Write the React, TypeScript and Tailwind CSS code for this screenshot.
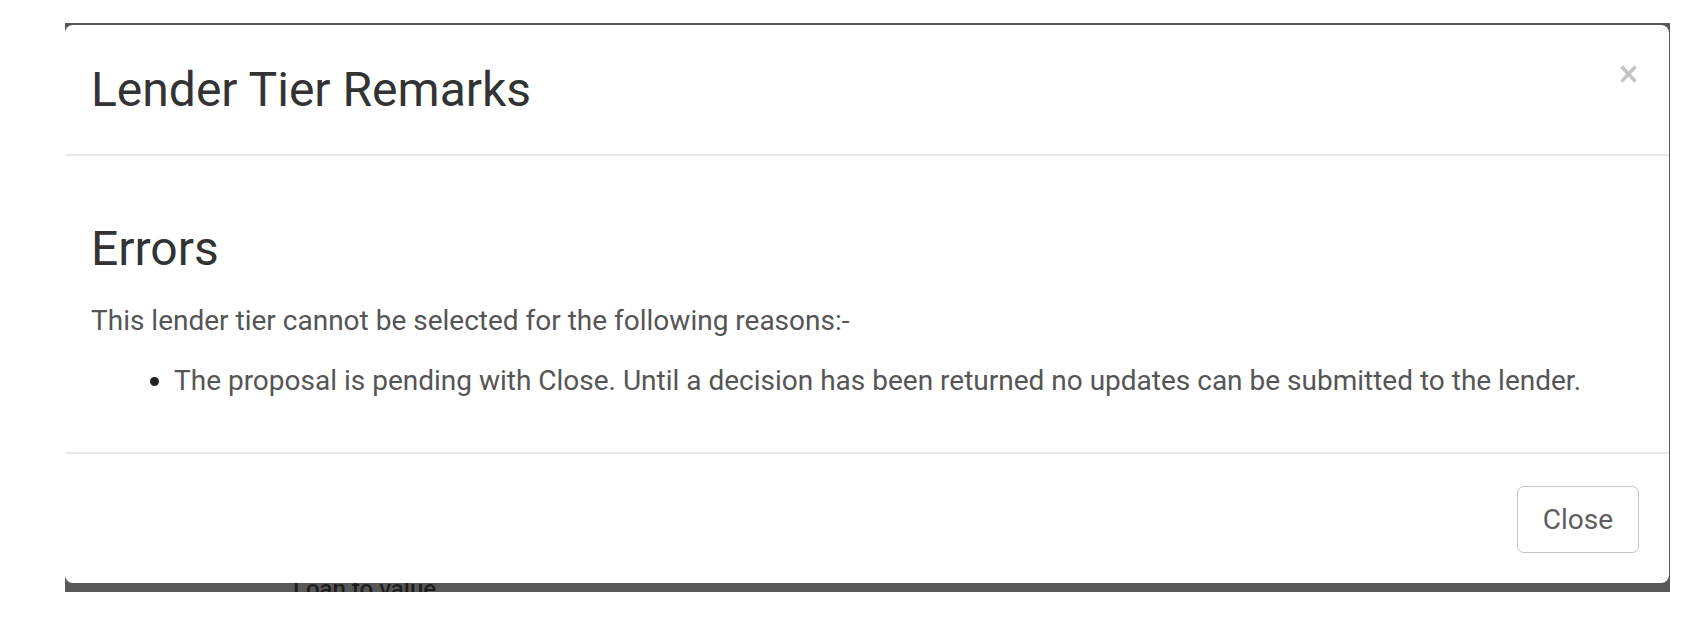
export default function App() {
  return (
    <div className="min-h-[620px] w-[1706px] bg-white pt-[23px] pl-[65px] font-['Roboto','Liberation_Sans',sans-serif]">
      <div className="flex h-[569px] w-[1605px] flex-col overflow-hidden bg-[#585858] pt-[2px]">
        <div className="relative z-10 flex h-[558px] w-[1604px] shrink-0 flex-col rounded-[8px] bg-white">
          <div className="flex items-start justify-between border-b-2 border-[#e8e8e8] pt-[31px] pr-[32px] pb-[31px] pl-[26px]">
            <h4 className="text-[48px] leading-[67px] font-normal text-[#333]">Lender Tier Remarks</h4>
            <button className="mt-[9px] text-[#c4c4c4]" aria-label="Close">
              <svg width="17" height="18" viewBox="0 0 17 18" fill="none" stroke="currentColor" strokeWidth="3.4" strokeLinecap="butt">
                <path d="M1.5 1.5 L15.5 16.5 M15.5 1.5 L1.5 16.5" />
              </svg>
            </button>
          </div>

          <div className="flex-1 pt-[67px] pr-[30px] pl-[26px] text-[28px] leading-[40px] text-[#555]">
            <h3 className="text-[48px] leading-[52px] font-normal text-[#333]">Errors</h3>
            <p className="mt-[26px]">This lender tier cannot be selected for the following reasons:-</p>
            <ul className="mt-[20px] list-disc pl-[83px] marker:text-[#222]">
              <li>
                The proposal is pending with Close. Until a decision has been returned no updates can be submitted to
                the lender.
              </li>
            </ul>
          </div>

          <div className="flex justify-end border-t-2 border-[#e8e8e8] pt-[32px] pr-[30px] pb-[30px]">
            <button className="flex h-[67px] items-center rounded-[7px] border border-[#c4c4c4] bg-white px-[25px] text-[28px] leading-[40px] text-[#5e5e5e]">
              Close
            </button>
          </div>
        </div>
        <div className="-mt-[6px] pl-[228px] text-[24px] leading-[24px] font-medium text-[#1e1e1e]">Loan to value</div>
      </div>
    </div>
  );
}
